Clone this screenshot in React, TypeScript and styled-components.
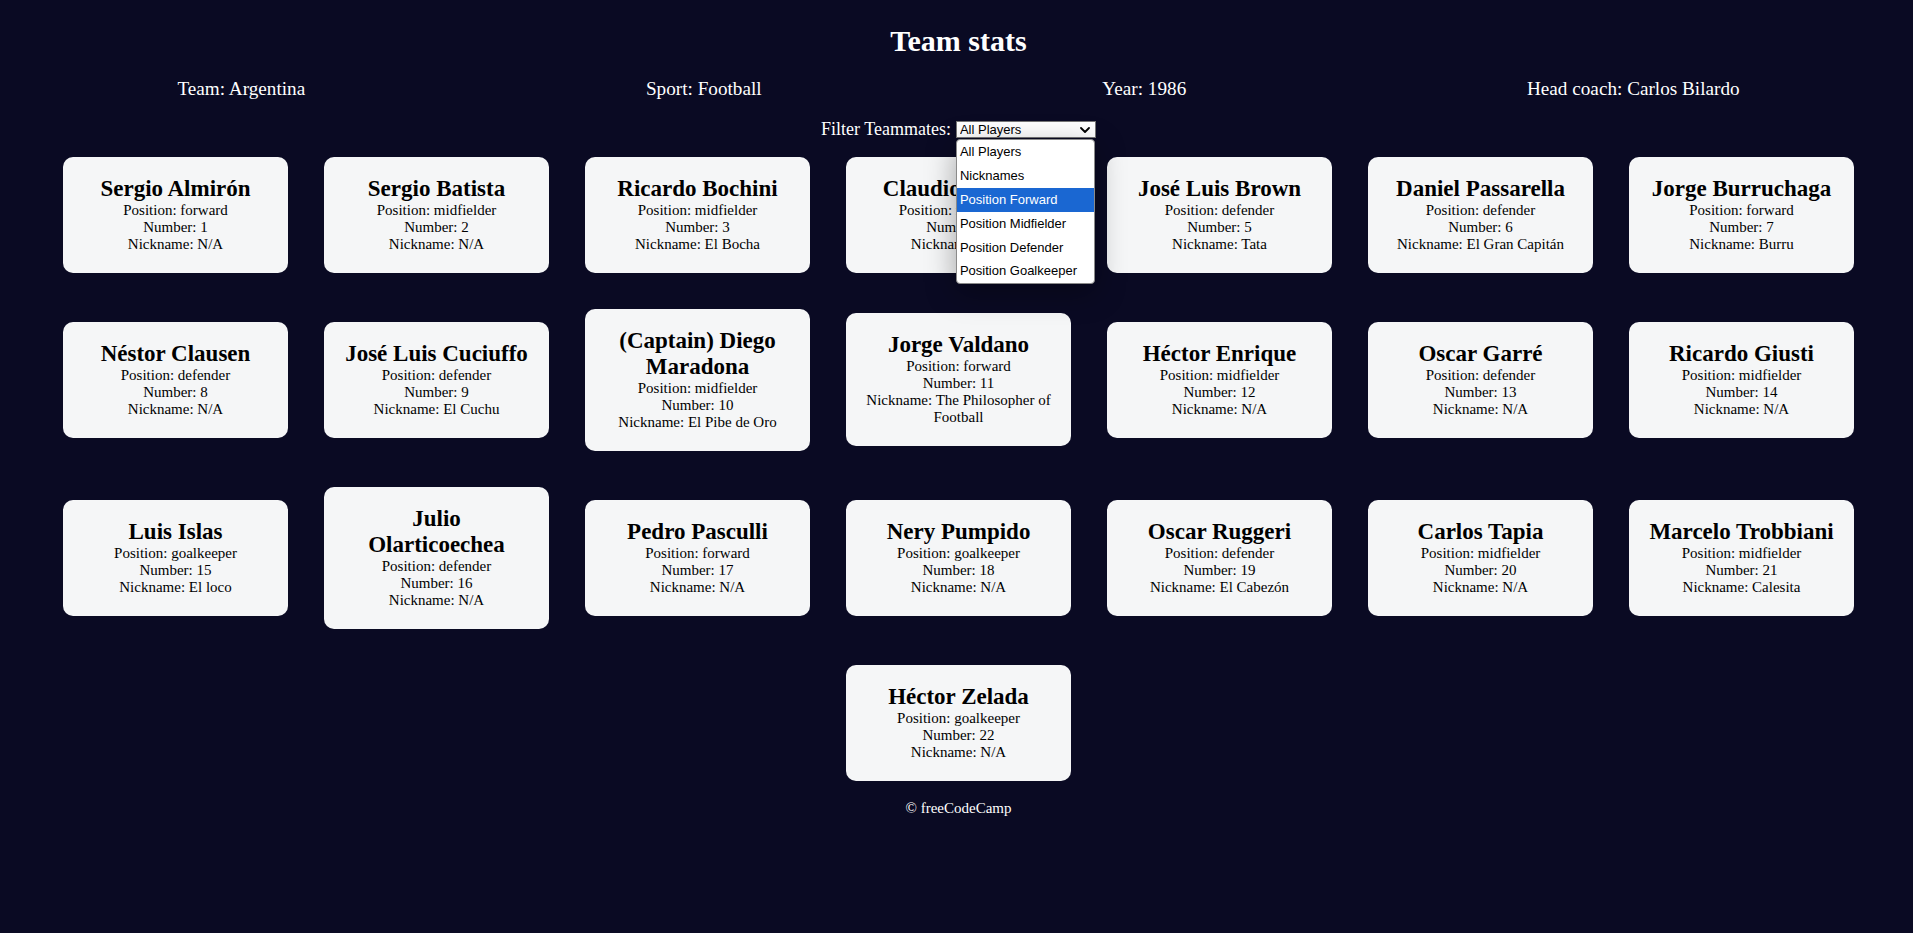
import React from "react";
import styled, { createGlobalStyle } from "styled-components";

type Player = {
  name: string;
  position: string;
  number: number;
  isCaptain: boolean;
  nickname: string | null;
};

const players: Player[] = [
  { name: "Sergio Almirón", position: "forward", number: 1, isCaptain: false, nickname: null },
  { name: "Sergio Batista", position: "midfielder", number: 2, isCaptain: false, nickname: null },
  { name: "Ricardo Bochini", position: "midfielder", number: 3, isCaptain: false, nickname: "El Bocha" },
  { name: "Claudio Borghi", position: "midfielder", number: 4, isCaptain: false, nickname: null },
  { name: "José Luis Brown", position: "defender", number: 5, isCaptain: false, nickname: "Tata" },
  { name: "Daniel Passarella", position: "defender", number: 6, isCaptain: false, nickname: "El Gran Capitán" },
  { name: "Jorge Burruchaga", position: "forward", number: 7, isCaptain: false, nickname: "Burru" },
  { name: "Néstor Clausen", position: "defender", number: 8, isCaptain: false, nickname: null },
  { name: "José Luis Cuciuffo", position: "defender", number: 9, isCaptain: false, nickname: "El Cuchu" },
  { name: "Diego Maradona", position: "midfielder", number: 10, isCaptain: true, nickname: "El Pibe de Oro" },
  { name: "Jorge Valdano", position: "forward", number: 11, isCaptain: false, nickname: "The Philosopher of Football" },
  { name: "Héctor Enrique", position: "midfielder", number: 12, isCaptain: false, nickname: null },
  { name: "Oscar Garré", position: "defender", number: 13, isCaptain: false, nickname: null },
  { name: "Ricardo Giusti", position: "midfielder", number: 14, isCaptain: false, nickname: null },
  { name: "Luis Islas", position: "goalkeeper", number: 15, isCaptain: false, nickname: "El loco" },
  { name: "Julio Olarticoechea", position: "defender", number: 16, isCaptain: false, nickname: null },
  { name: "Pedro Pasculli", position: "forward", number: 17, isCaptain: false, nickname: null },
  { name: "Nery Pumpido", position: "goalkeeper", number: 18, isCaptain: false, nickname: null },
  { name: "Oscar Ruggeri", position: "defender", number: 19, isCaptain: false, nickname: "El Cabezón" },
  { name: "Carlos Tapia", position: "midfielder", number: 20, isCaptain: false, nickname: null },
  { name: "Marcelo Trobbiani", position: "midfielder", number: 21, isCaptain: false, nickname: "Calesita" },
  { name: "Héctor Zelada", position: "goalkeeper", number: 22, isCaptain: false, nickname: null },
];

const options = [
  { value: "all", label: "All Players" },
  { value: "nickname", label: "Nicknames" },
  { value: "forward", label: "Position Forward" },
  { value: "midfielder", label: "Position Midfielder" },
  { value: "defender", label: "Position Defender" },
  { value: "goalkeeper", label: "Position Goalkeeper" },
];

const GlobalStyle = createGlobalStyle`
  *, *::before, *::after { box-sizing: border-box; }
  html, body { margin: 0; padding: 0; }
  body {
    background: #0a0a23;
    font-family: "Liberation Serif", "Times New Roman", serif;
    text-align: center;
    color: #000;
  }
`;

const Page = styled.div`
  padding: 0 3px 0 7px;
`;

const Header = styled.header`
  display: flex;
  flex-direction: column;
`;

const Title = styled.h1`
  margin: 24px 0 0;
  font-size: 30px;
  line-height: 34px;
  font-weight: 700;
  color: #ffffff;
`;

const Stats = styled.div`
  display: flex;
  justify-content: space-around;
  margin-top: 19.5px;
  color: #ffffff;
  font-size: 19.2px;
  line-height: 22px;
`;

const Stat = styled.p`
  margin: 0;
`;

const FilterRow = styled.div`
  display: flex;
  justify-content: center;
  align-items: flex-end;
  gap: 5px;
  margin-top: 19px;
  height: 20px;
`;

const FilterLabel = styled.label`
  color: #ffffff;
  font-size: 18px;
  line-height: 20px;
`;

const SelectWrap = styled.div`
  position: relative;
  width: 140px;
  height: 17px;
  margin-bottom: 0.5px;
`;

const SelectBox = styled.select`
  appearance: none;
  -webkit-appearance: none;
  display: block;
  width: 100%;
  height: 100%;
  margin: 0;
  padding: 0 0 0 3px;
  border: 1px solid #767676;
  border-radius: 0;
  background: #ffffff;
  color: #000;
  font-family: "Liberation Sans", Arial, sans-serif;
  font-size: 13px;
  line-height: 15px;
  outline: none;
`;

const Chevron = styled.svg`
  position: absolute;
  right: 6px;
  top: 6px;
  pointer-events: none;
`;

const Popup = styled.ul`
  position: absolute;
  top: 18px;
  left: 0;
  width: 139px;
  margin: 0;
  padding: 0;
  list-style: none;
  background: #ffffff;
  border: 1px solid #8a8a8a;
  border-radius: 4px;
  overflow: hidden;
  box-shadow: 0 8px 30px rgba(0, 0, 0, 0.35);
  text-align: left;
  z-index: 10;
`;

const PopupOption = styled.li<{ $active?: boolean }>`
  height: 23.9px;
  line-height: 23.9px;
  padding-left: 3px;
  font-family: "Liberation Sans", Arial, sans-serif;
  font-size: 13px;
  white-space: nowrap;
  background: ${(p) => (p.$active ? "#1a67d2" : "transparent")};
  color: ${(p) => (p.$active ? "#ffffff" : "#000000")};
`;

const Cards = styled.main`
  display: flex;
  flex-wrap: wrap;
  justify-content: center;
  align-items: center;
`;

const Card = styled.div`
  width: 225px;
  margin: 18px;
  padding: 19px 18px 20px;
  background: #f5f6f7;
  border-radius: 10px;
`;

const CardName = styled.h2`
  margin: 0;
  font-size: 23px;
  line-height: 26px;
  font-weight: 700;
`;

const CardLine = styled.p`
  margin: 0;
  font-size: 15px;
  line-height: 17px;
`;

const Footer = styled.footer`
  color: #ffffff;
  font-size: 15px;
  line-height: 17px;
  padding-top: 1px;
`;

export default function App() {
  return (
    <>
      <GlobalStyle />
      <Page>
        <Header>
          <Title>Team stats</Title>
          <Stats>
            <Stat>Team: <span>Argentina</span></Stat>
            <Stat>Sport: <span>Football</span></Stat>
            <Stat>Year: <span>1986</span></Stat>
            <Stat>Head coach: <span>Carlos Bilardo</span></Stat>
          </Stats>
          <FilterRow>
            <FilterLabel htmlFor="players">Filter Teammates:</FilterLabel>
            <SelectWrap>
              <SelectBox name="players" id="players" defaultValue="all">
                {options.map((o) => (
                  <option key={o.value} value={o.value}>
                    {o.label}
                  </option>
                ))}
              </SelectBox>
              <Chevron width="10" height="6" viewBox="0 0 10 6" aria-hidden="true">
                <polyline points="1,1 5,5 9,1" fill="none" stroke="#000" strokeWidth="1.8" strokeLinecap="round" strokeLinejoin="round" />
              </Chevron>
              <Popup role="listbox">
                {options.map((o) => (
                  <PopupOption key={o.value} $active={o.value === "forward"}>
                    {o.label}
                  </PopupOption>
                ))}
              </Popup>
            </SelectWrap>
          </FilterRow>
        </Header>
        <Cards id="player-cards">
          {players.map((p) => (
            <Card key={p.number}>
              <CardName>{p.isCaptain ? "(Captain) " : ""}{p.name}</CardName>
              <CardLine>Position: {p.position}</CardLine>
              <CardLine>Number: {p.number}</CardLine>
              <CardLine>Nickname: {p.nickname !== null ? p.nickname : "N/A"}</CardLine>
            </Card>
          ))}
        </Cards>
        <Footer>© freeCodeCamp</Footer>
      </Page>
    </>
  );
}
